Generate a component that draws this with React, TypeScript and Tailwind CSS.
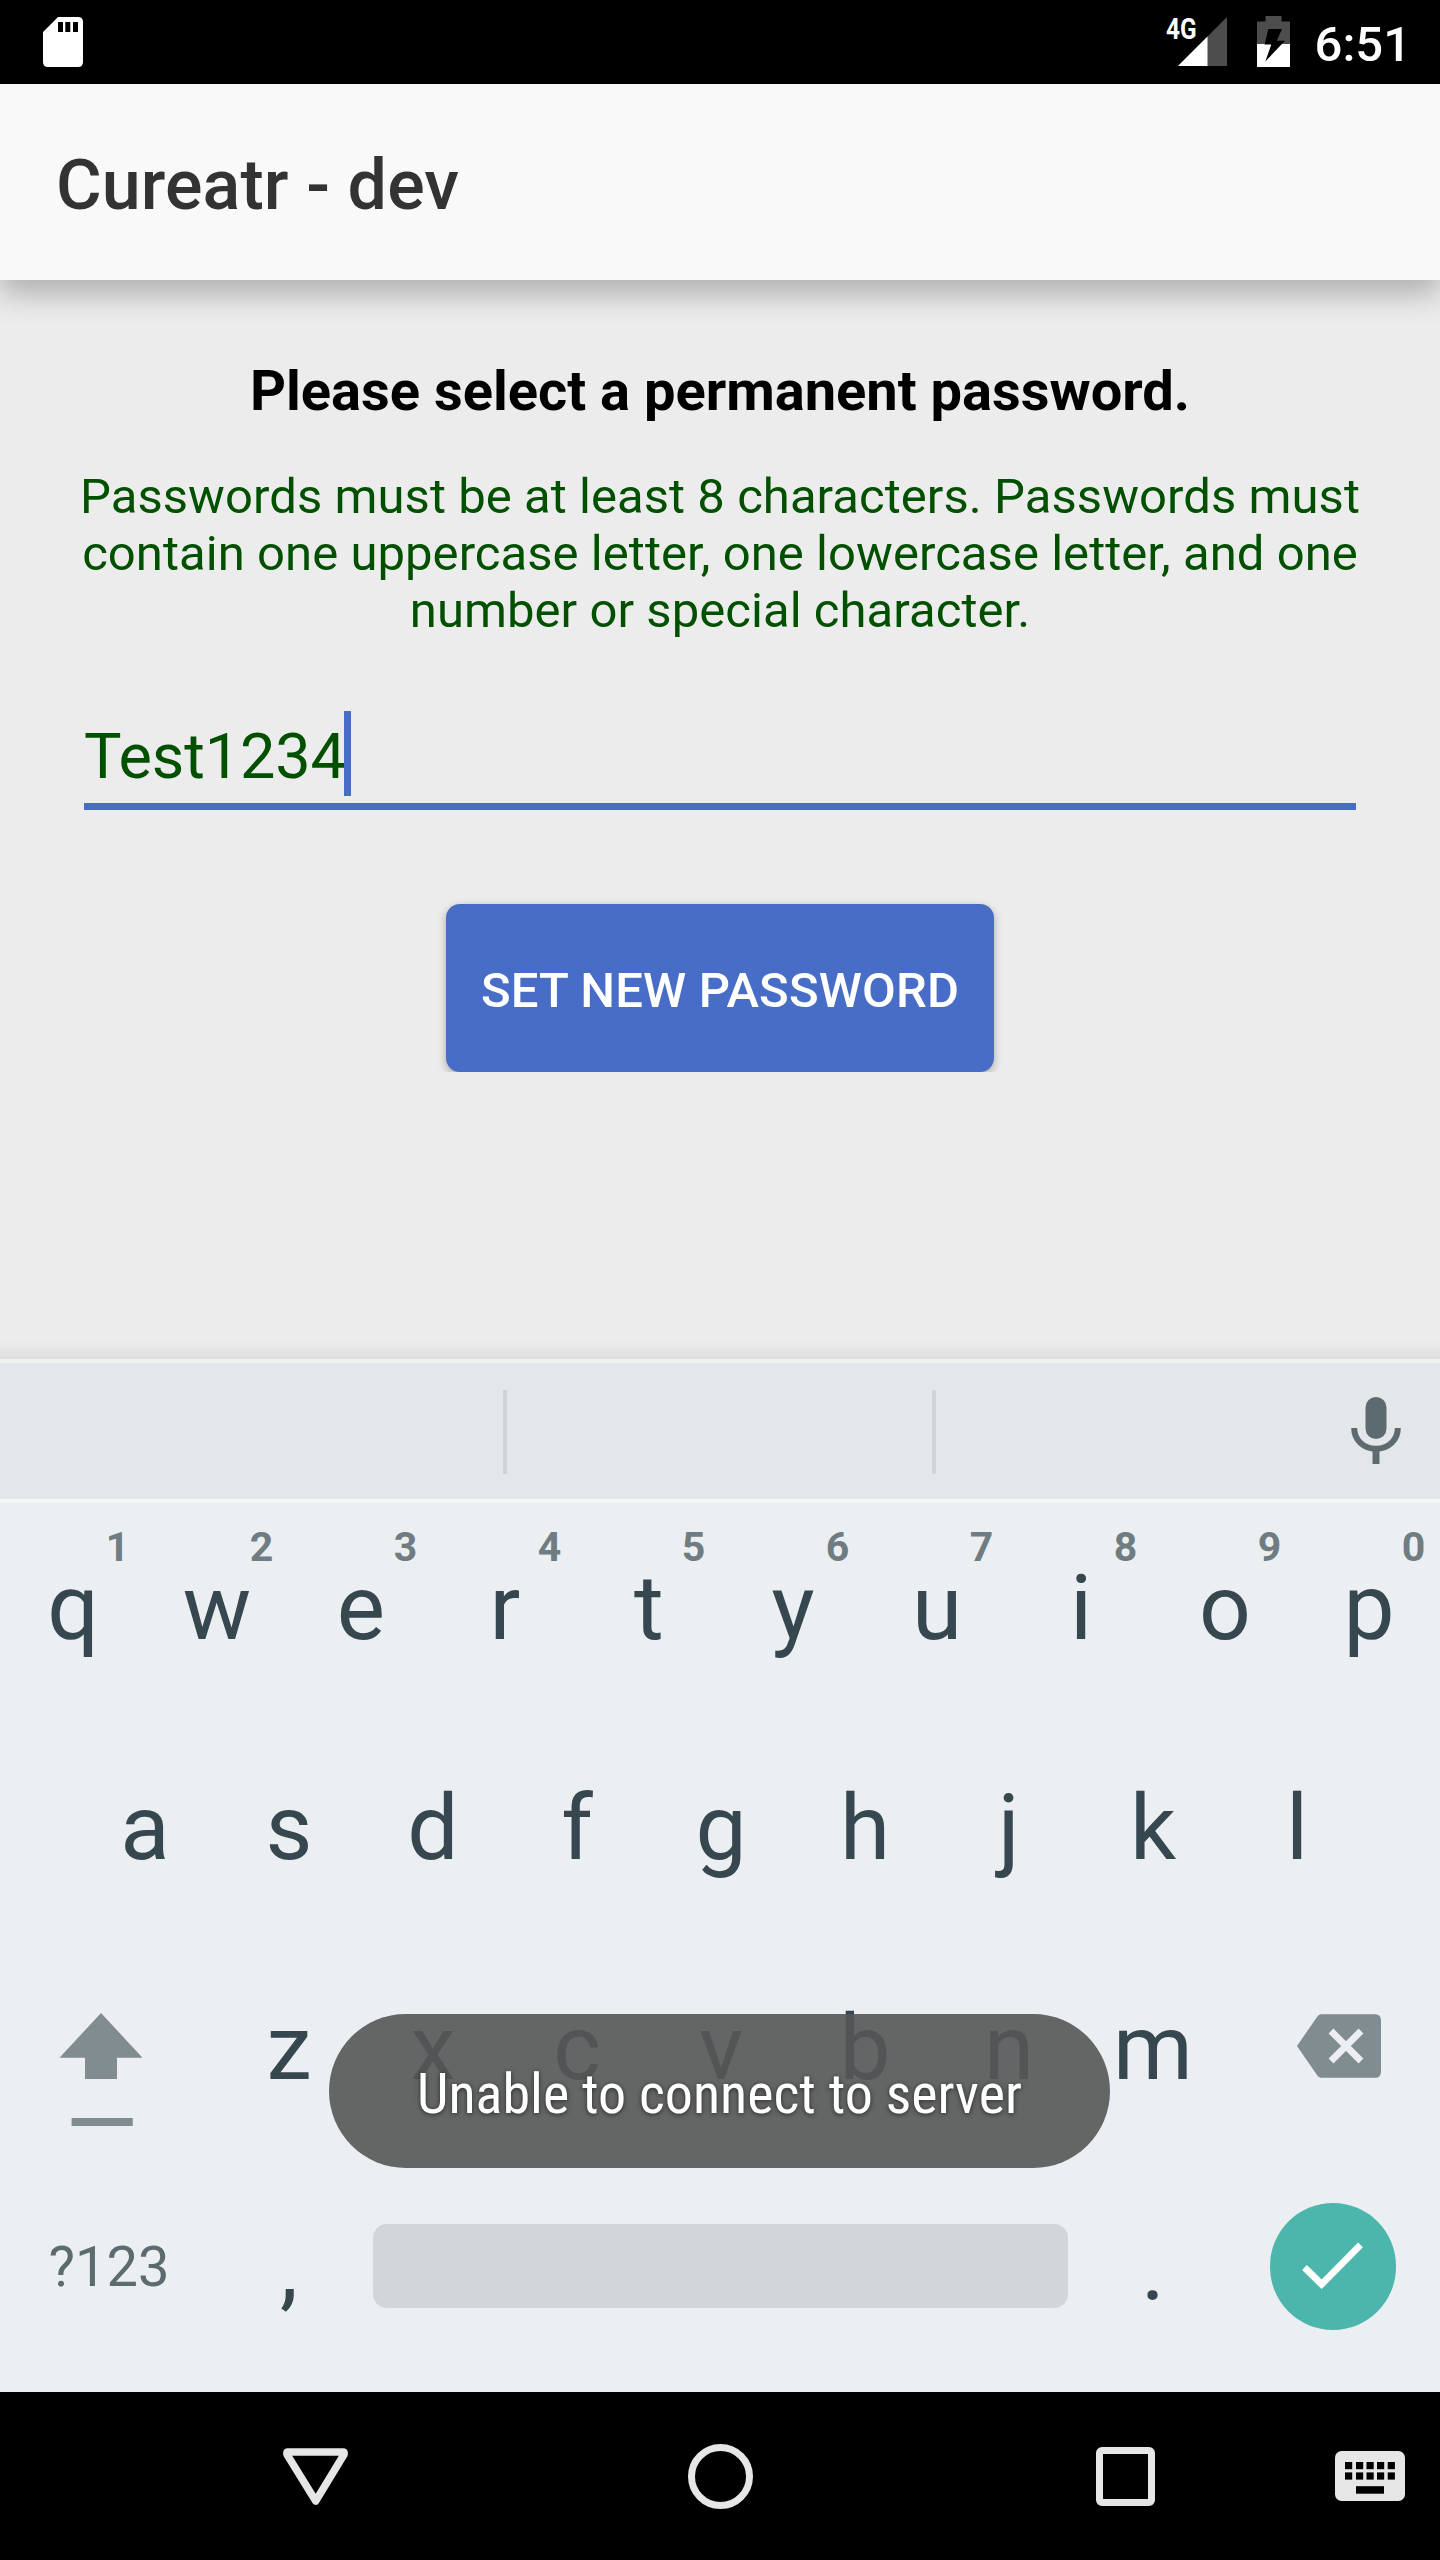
import React from "react";

const numbers = ["1", "2", "3", "4", "5", "6", "7", "8", "9", "0"];

function Key({ label, hint }: { label: string; hint?: string }) {
  return (
    <div className="relative h-[220px] w-36 pl-[2px] text-center text-[91px] leading-[210px] text-[#37474f]">
      {label}
      {hint && (
        <span className="absolute top-[16px] right-[14px] w-[25px] text-center text-[41px] leading-[56px] font-bold text-[#6f7d83]">
          {hint}
        </span>
      )}
    </div>
  );
}

function StatusBar() {
  return (
    <header className="flex h-[84px] items-start bg-black text-white">
      <svg className="mt-[17px] ml-[43px] h-[50px] w-[40px]" viewBox="0 0 40 50">
        <path
          fill="#fff"
          fillRule="evenodd"
          d="M15 0H35Q40 0 40 5V45Q40 50 35 50H5Q0 50 0 45V15ZM15 5V15H20V5ZM22.3 5V15H27.3V5ZM30 5V15H35V5Z"
        />
      </svg>
      <div className="relative mt-[17px] ml-auto h-[50px] w-[61px]">
        <svg className="absolute top-0 right-0 h-[49px] w-[49px]" viewBox="0 0 49 49">
          <path fill="#4d4d4d" d="M0 49 49 0V49Z" />
          <path fill="#fff" d="M0 49 29.5 19.5V49Z" />
        </svg>
        <span className="absolute top-[-5px] left-0 origin-left scale-x-[0.84] text-[29px] leading-[34px] font-bold">
          4G
        </span>
      </div>
      <svg className="mt-4 ml-[30px] h-[51px] w-[33px]" viewBox="0 0 33 51">
        <path fill="#4d4d4d" d="M8.500 0H24.500V5.500H33V28H0V5.500H8.500Z" />
        <path fill="#fff" d="M0 28H33V51H0Z" />
        <path fill="#000" d="M11.300 13H25L19.700 24.700H28L8.300 45.500 14.300 28.500H7.600Z" />
      </svg>
      <span className="mt-[17px] mr-[29px] ml-[25px] text-[49px] leading-[56px] font-medium">6:51</span>
    </header>
  );
}

function SuggestionStrip() {
  return (
    <div className="flex h-[140px] items-start border-t-[4px] border-[#f0f2f2] bg-[#e3e7ea]">
      <div className="mt-[27px] ml-[503px] h-[84px] w-1 bg-[#cfd4d7]" />
      <div className="mt-[27px] ml-[425px] h-[84px] w-1 bg-[#cfd4d7]" />
      <svg className="mt-[34px] mr-[39px] ml-auto h-[67px] w-[50px]" viewBox="0 0 50 67">
        <rect x="14.500" y="0" width="21" height="42" rx="10.500" fill="#5d6a70" />
        <path d="M3.200 31C3.200 43 12.500 51.800 25 51.800S46.800 43 46.800 31" fill="none" stroke="#5d6a70" strokeWidth="6" />
        <path d="M21.500 53H28.500V67H21.500Z" fill="#5d6a70" />
      </svg>
    </div>
  );
}

function Keyboard() {
  return (
    <section className="relative h-[1033px] bg-[#ebeff2]">
      <SuggestionStrip />
      <div className="h-1 bg-[#f4f6f8]" />
      <div className="flex">
        {"qwertyuiop".split("").map((c, i) => (
          <Key key={c} label={c} hint={numbers[i]} />
        ))}
      </div>
      <div className="flex px-[72px]">
        {"asdfghjkl".split("").map((c) => (
          <Key key={c} label={c} />
        ))}
      </div>
      <div className="flex">
        <div className="w-[216px]">
          <svg className="mt-[70px] ml-[59px] h-[113px] w-[84px]" viewBox="0 0 84 113" fill="#808c90">
            <path d="M42 0 83.500 44.700H58V66H26V44.700H0.500Z" />
            <path d="M12.600 105H73.700V113H12.600Z" />
          </svg>
        </div>
        {"zxcvbnm".split("").map((c) => (
          <Key key={c} label={c} />
        ))}
        <div className="w-[216px]">
          <svg className="mt-[71px] ml-[73px] h-[64px] w-[84px]" viewBox="0 0 84 64">
            <path fill="#808c90" d="M24 0.300H78Q84 0.300 84 6.300V57.700Q84 63.700 78 63.700H24Q21.500 63.700 20 61L0 32 20 3Q21.500 0.300 24 0.300Z" />
            <path d="M34 17 64 47M64 17 34 47" stroke="#ebeff2" strokeWidth="6.800" />
          </svg>
        </div>
      </div>
      <div className="flex">
        <div className="w-[216px] pl-[2px] text-center text-[56px] leading-[208px] text-[#5c6b70]">?123</div>
        <Key label="," />
        <div className="mr-[12px] ml-[13px] mt-[61px] h-[84px] w-[695px] rounded-[14px] bg-[#d1d6d9]" />
        <Key label="." />
        <div className="w-[216px]">
          <div className="mt-[40px] ml-[45.5px] h-[126.5px] w-[126px] rounded-full bg-[#4db6ac]">
            <svg className="h-[127px] w-[127px]" viewBox="0 0 127 127">
              <path d="M34.500 64.500 51.600 81.300 90.500 41.800" fill="none" stroke="#fff" strokeWidth="6.800" />
            </svg>
          </div>
        </div>
      </div>
      <div className="absolute top-[655px] left-[329px] h-[154px] w-[781px] rounded-full bg-[#555555]/90 text-center text-[56px] leading-[160px] whitespace-nowrap text-white">
        <span className="inline-block [text-shadow:0_1px_5px_rgba(0,0,0,0.6)] [font-stretch:75%]">
          Unable to connect to server
        </span>
      </div>
    </section>
  );
}

function NavBar() {
  return (
    <nav className="flex h-[168px] items-start bg-black">
      <svg className="mt-[56px] ml-[283px] h-[57px] w-[65px]" viewBox="0 0 65 57">
        <path d="M4.500 4H60.500Q61.500 4 61 6.500L32.700 53 4 6.500Q3.500 4 4.500 4Z" fill="none" stroke="#e6e6e6" strokeWidth="7.500" strokeLinejoin="round" />
      </svg>
      <div className="mt-[52px] ml-[340px] h-[65px] w-[65px] rounded-full border-[7.500px] border-[#e6e6e6]" />
      <div className="mt-[55px] ml-[343px] h-[59px] w-[59px] rounded-[6px] border-[7px] border-[#e6e6e6]" />
      <svg className="mt-[59px] mr-[35px] ml-auto h-[50px] w-[70px]" viewBox="0 0 70 50">
        <rect width="70" height="50" rx="6.500" fill="#e6e6e6" />
        {[10, 21, 31.5, 42, 52.700].map((x) => (
          <React.Fragment key={x}>
            <rect x={x} y="11" width="7.200" height="7.200" />
            <rect x={x} y="21.400" width="7.200" height="7.200" />
          </React.Fragment>
        ))}
        <rect x="21" y="35.200" width="28" height="7.500" />
      </svg>
    </nav>
  );
}

export default function App() {
  return (
    <div className="h-[2560px] w-[1440px] overflow-hidden bg-[#ececec] [font-family:Roboto,sans-serif]">
      <StatusBar />
      <div className="relative h-[196px] bg-[#f9f9f9] pt-[60px] pl-14 shadow-[0_14px_28px_rgba(0,0,0,0.26)]">
        <h1 className="text-[70px] leading-[82px] font-medium tracking-[0.1px] text-[#333]">Cureatr - dev</h1>
      </div>
      <main className="flex h-[1079px] flex-col items-center">
        <h2 className="mt-[78px] text-[56px] leading-[66px] font-bold text-black">
          Please select a permanent password.
        </h2>
        <p className="mt-[44px] text-center text-[49px] leading-[57px] tracking-[0.055px] whitespace-nowrap text-[#005000]">
          Passwords must be at least 8 characters. Passwords must
          <br />
          contain one uppercase letter, one lowercase letter, and one
          <br />
          number or special character.
        </p>
        <div className="mt-[72px] flex h-[99px] w-[1272px] items-start border-b-[7px] border-[#486dc6]">
          <span className="mt-[9px] w-[260px] text-[63px] leading-[74px] tracking-[-0.1px] text-[#005000]">Test1234</span>
          <span className="h-[85px] w-[7px] bg-[#486dc6]" />
        </div>
        <div className="mt-[80px] h-[182px] w-[576px] overflow-hidden px-[14px] pt-[14px]">
          <button className="h-[168px] w-[548px] rounded-[14px] bg-[#486dc6] pt-[6px] text-[49px] font-medium tracking-[0.15px] text-white shadow-[0_3px_8px_rgba(0,0,0,0.3)]">
            SET NEW PASSWORD
          </button>
        </div>
        <div className="mt-auto h-[18px] w-full bg-gradient-to-b from-[#ececec] to-[#dedede]" />
      </main>
      <Keyboard />
      <NavBar />
    </div>
  );
}
